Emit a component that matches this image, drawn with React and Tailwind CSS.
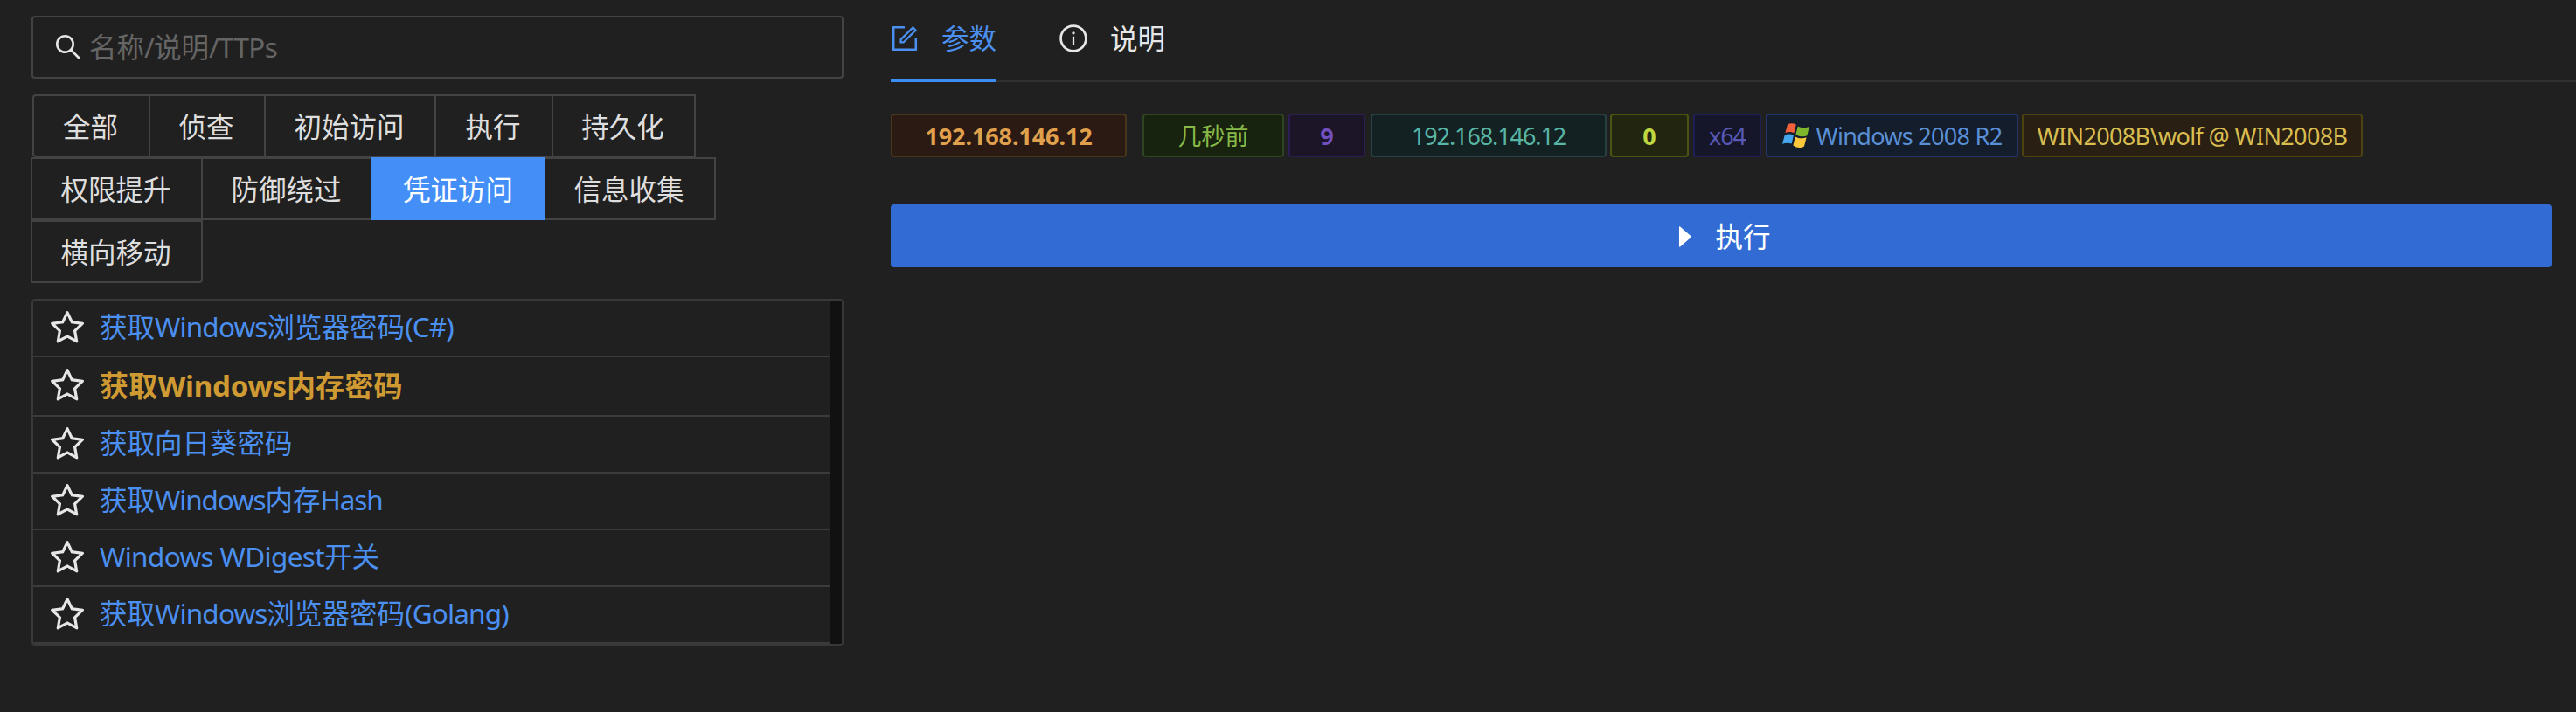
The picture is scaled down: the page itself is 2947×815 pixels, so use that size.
import React from "react";
import {
  AiOutlineSearch,
  AiOutlineStar,
  AiOutlineForm,
  AiOutlineInfoCircle,
  AiFillCaretRight,
} from "react-icons/ai";

const CJK = /([\u3000-\u9fff]+)/;

/* Mixed-script label: Latin and Chinese runs carry their own letter spacing. */
function Label({ children, latin = "tracking-[-1.1px]", cjk = "" }) {
  return (
    <span className="whitespace-pre">
      {children.split(CJK).map((run, i) =>
        run === "" ? null : (
          <span key={i} className={CJK.test(run) ? cjk : latin}>
            {run}
          </span>
        )
      )}
    </span>
  );
}

function Cell({ className, children }) {
  return (
    <button className={`h-full flex items-center justify-center pr-[2px] pt-[2px] border-y-2 border-l-2 border-[#434343] ${className}`}>
      {children}
    </button>
  );
}

const techniques = [
  { name: "获取Windows浏览器密码(C#)", latin: "tracking-[-0.85px]" },
  { name: "获取Windows内存密码", latin: "tracking-[-0.2px]", cjk: "tracking-[0.2px]", selected: true },
  { name: "获取向日葵密码" },
  { name: "获取Windows内存Hash", latin: "tracking-[-1.15px]" },
  { name: "Windows WDigest开关", latin: "tracking-[-0.65px]" },
  { name: "获取Windows浏览器密码(Golang)", latin: "tracking-[-0.85px]" },
];

function Tag({ className, children }) {
  return (
    <div className={`h-[50px] flex items-center justify-center rounded-[4px] border-2 text-[27px] ${className}`}>
      {children}
    </div>
  );
}

function WindowsLogo() {
  return (
    <svg className="w-[31px] h-[29px] shrink-0" viewBox="0 0 31 29">
      <path fill="#f2603c" d="M6 1.4C9 0 12.4 0 15.8 1.6L13.4 11.2C10 9.8 7 9.8 3.4 11Z" />
      <path fill="#80b82d" d="M17.8 3.6C21.6 5.8 26 5.9 30.8 3.8L28.4 14.2C24 16 19.6 15.6 15.4 13Z" />
      <path fill="#45a8ee" d="M2.8 13.6C6 12.2 9.6 12.2 13 13.8L10.6 23.6C7.2 22.2 3.8 22.4 0 23.8Z" />
      <path fill="#fbc83b" d="M14.8 15.4C19 17.6 23.2 18 27.6 16.2L25 26.4C21 29 16.6 28.6 12.4 25.6Z" />
    </svg>
  );
}

export default function App() {
  return (
    <div className="w-[2947px] h-[815px] overflow-hidden bg-[#202020] text-[#dedede] flex text-[31.5px] leading-none font-['Noto_Sans','Noto_Sans_CJK_SC',sans-serif]">
      <aside className="w-[983px] pl-[35px] pr-[18px] pt-[18px] flex flex-col shrink-0">
        <div className="ml-px h-[72px] border-2 border-[#434343] rounded-[4px] pl-[22px] flex items-center">
          <AiOutlineSearch className="w-[36px] h-[36px] text-[#e6e6e6]" />
          <span className="ml-[6px] text-[#656565]">
            <Label latin="tracking-[-0.7px]">名称/说明/TTPs</Label>
          </span>
        </div>

        <div className="mt-[18px] flex flex-col">
          <div className="h-[72px] flex pl-[2px]">
            <Cell className="w-[133px] rounded-l-[4px]">全部</Cell>
            <Cell className="w-[132px]">侦查</Cell>
            <Cell className="w-[195px]">初始访问</Cell>
            <Cell className="w-[134px]">执行</Cell>
            <Cell className="w-[165px] border-r-2">持久化</Cell>
          </div>
          <div className="h-[72px] flex">
            <Cell className="w-[195px]">权限提升</Cell>
            <Cell className="w-[195px]">防御绕过</Cell>
            <button className="w-[198px] h-full bg-[#438ef7] text-white flex items-center justify-center pt-[2px]">凭证访问</button>
            <button className="w-[196px] h-full flex items-center justify-center pt-[2px] pr-px border-y-2 border-r-2 border-[#434343]">信息收集</button>
          </div>
          <div className="h-[72px] flex">
            <Cell className="w-[197px] border-r-2 rounded-br-[4px]">横向移动</Cell>
          </div>
        </div>

        <div className="mt-[18px] ml-px h-[397px] border-2 border-[#383838] rounded-[4px] flex overflow-hidden">
          <ul className="w-[911px] flex flex-col">
            {techniques.map((t) => (
              <li
                key={t.name}
                className={`flex items-center pl-[16px] border-b-2 border-[#3b3b3b] ${
                  t.selected ? "h-[68px] text-[33px] text-[#d09a33] font-bold" : "h-[65px] text-[#4b8ff0]"
                }`}
              >
                <AiOutlineStar className="w-[46px] h-[46px] shrink-0 text-[#e6e6e6]" />
                <span className={`ml-[14px] ${t.selected ? "pb-px" : "pb-[3px]"}`}>
                  <Label latin={t.latin} cjk={t.cjk}>{t.name}</Label>
                </span>
              </li>
            ))}
          </ul>
          <div className="flex-1 bg-[#111111]" />
        </div>
      </aside>

      <main className="flex-1 pl-[36px] flex flex-col">
        <nav className="h-[94px] border-b-2 border-[#303030] flex gap-[70px]">
          <div className="w-[121px] h-[94px] flex items-center pb-[2px] border-b-4 border-[#3c8ef5] text-[#4b8ff0]">
            <AiOutlineForm className="-ml-[2px] w-[36px] h-[36px] shrink-0" />
            <span className="ml-[24px] whitespace-nowrap">参数</span>
          </div>
          <div className="h-[90px] flex items-center pb-[2px] text-[#e6e6e6]">
            <AiOutlineInfoCircle className="w-[36px] h-[36px]" />
            <span className="ml-[24px]">说明</span>
          </div>
        </nav>

        <div className="mt-[36px] flex">
          <Tag className="w-[270px] bg-[#2a1a13] border-[#48361a] text-[#e0a04c] font-bold">
            <Label latin="tracking-[-0.1px]">192.168.146.12</Label>
          </Tag>
          <Tag className="ml-[18px] w-[162px] bg-[#18230f] border-[#2f4420] text-[#86b947]">几秒前</Tag>
          <Tag className="ml-[5px] w-[88px] bg-[#1c1427] border-[#2c1d52] text-[#7350c0] font-bold">9</Tag>
          <Tag className="ml-[6px] w-[270px] bg-[#132122] border-[#274042] text-[#58b5a5]">
            <Label>192.168.146.12</Label>
          </Tag>
          <Tag className="ml-[4px] w-[90px] bg-[#222611] border-[#4d5413] text-[#c0d840] font-bold">0</Tag>
          <Tag className="ml-[5px] w-[78px] bg-[#16162b] border-[#1f1f55] text-[#5759b5]">
            <Label>x64</Label>
          </Tag>
          <Tag className="ml-[5px] w-[289px] bg-[#131d2b] border-[#25336a] text-[#5a8fd6] gap-[8px]">
            <WindowsLogo />
            <Label latin="tracking-[-0.7px]">Windows 2008 R2</Label>
          </Tag>
          <Tag className="ml-[4px] w-[390px] bg-[#2a1f13] border-[#4c4310] text-[#d8bd50]">
            <Label latin="tracking-[-0.65px]">WIN2008B\wolf @ WIN2008B</Label>
          </Tag>
        </div>

        <button className="mt-[54px] w-[1900px] h-[72px] rounded-[4px] bg-[#316bd3] text-white flex items-center justify-center pt-[2px] pr-px gap-[17px]">
          <AiFillCaretRight className="w-[34px] h-[34px]" />
          <span>执行</span>
        </button>
      </main>
    </div>
  );
}
